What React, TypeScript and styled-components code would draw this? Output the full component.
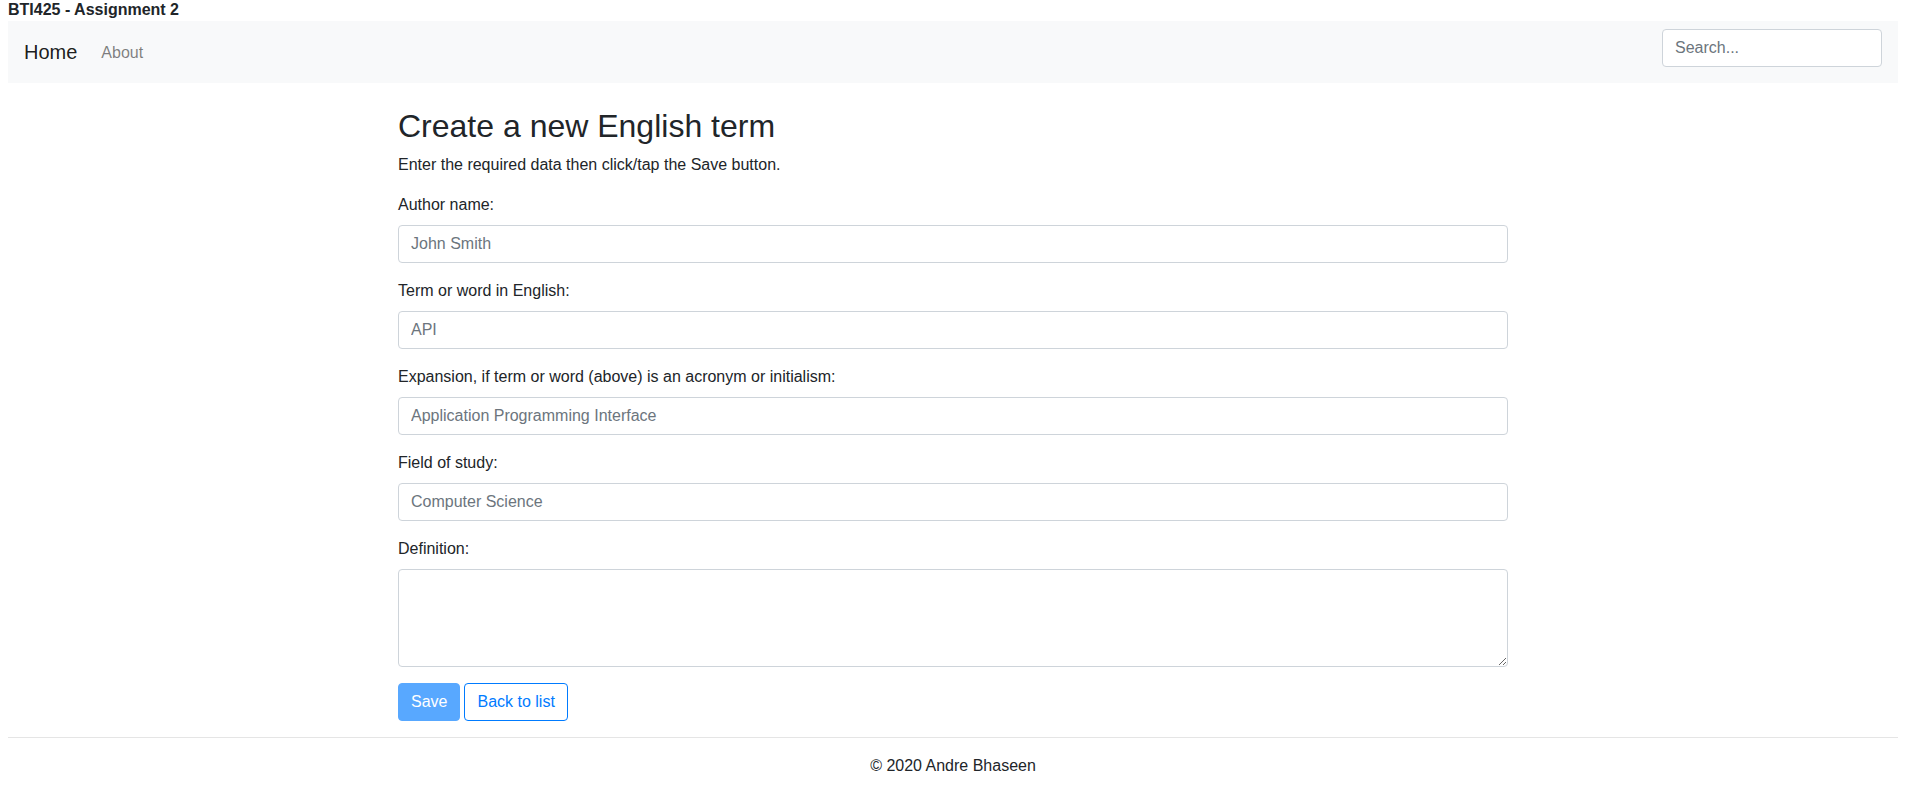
import React from "react";
import styled, { createGlobalStyle } from "styled-components";

const GlobalStyle = createGlobalStyle`
  html, body {
    background: #ffffff;
  }
  body {
    margin: 0 8px;
    font-family: "Liberation Sans", Arial, sans-serif;
    font-size: 16px;
    line-height: 1.5;
    color: #212529;
  }
  *, *::before, *::after {
    box-sizing: border-box;
  }
`;

const SiteTitle = styled.div`
  font-weight: 700;
  font-size: 16px;
  line-height: 20px;
  margin-bottom: 1px;
  color: #212529;
`;

const Navbar = styled.nav`
  display: flex;
  align-items: center;
  justify-content: space-between;
  height: 62px;
  padding: 0 16px;
  background: #f8f9fa;
`;

const NavLeft = styled.div`
  display: flex;
  align-items: center;
`;

const Brand = styled.a`
  font-size: 20px;
  line-height: 30px;
  padding: 5px 0;
  margin-right: 16px;
  color: rgba(0, 0, 0, 0.9);
  text-decoration: none;
`;

const NavLink = styled.a`
  padding: 9px 8px 7px;
  font-size: 16px;
  line-height: 24px;
  color: rgba(0, 0, 0, 0.5);
  text-decoration: none;
`;

const SearchInput = styled.input`
  align-self: flex-start;
  margin-top: 8px;
  width: 220px;
  height: 38px;
  padding: 6px 12px;
  font-family: "Liberation Sans", Arial, sans-serif;
  font-size: 16px;
  line-height: 1.5;
  color: #495057;
  background: #fff;
  border: 1px solid #ced4da;
  border-radius: 4px;
  outline: none;
  &::placeholder {
    color: #6c757d;
  }
`;

const Container = styled.main`
  max-width: 1140px;
  margin: 0 auto;
  padding: 24px 15px 0;
`;

const Heading = styled.h2`
  font-size: 32px;
  font-weight: 500;
  line-height: 1.2;
  margin: 0 0 8px;
`;

const Lead = styled.p`
  margin: 0 0 16px;
`;

const FormGroup = styled.div`
  margin-bottom: 16px;
`;

const Label = styled.label`
  display: block;
  margin-bottom: 8px;
  line-height: 24px;
`;

const TextInput = styled.input`
  display: block;
  width: 100%;
  height: 38px;
  padding: 6px 12px;
  font-family: "Liberation Sans", Arial, sans-serif;
  font-size: 16px;
  line-height: 1.5;
  color: #495057;
  background: #fff;
  border: 1px solid #ced4da;
  border-radius: 4px;
  outline: none;
  &::placeholder {
    color: #6c757d;
  }
`;

const TextArea = styled.textarea`
  display: block;
  width: 100%;
  height: 98px;
  padding: 6px 12px;
  font-family: "Liberation Sans", Arial, sans-serif;
  font-size: 16px;
  line-height: 1.5;
  color: #495057;
  background: #fff;
  border: 1px solid #ced4da;
  border-radius: 4px;
  outline: none;
`;

const ButtonRow = styled.div`
  display: flex;
  gap: 4px;
`;

const Button = styled.button<{ $variant: "primary" | "outline" }>`
  height: 38px;
  padding: 6px 12px;
  font-family: "Liberation Sans", Arial, sans-serif;
  font-size: 16px;
  line-height: 1.5;
  border-radius: 4px;
  border: 1px solid #007bff;
  cursor: pointer;
  background: ${(p) => (p.$variant === "primary" ? "#007bff" : "#fff")};
  color: ${(p) => (p.$variant === "primary" ? "#fff" : "#007bff")};
  &:disabled {
    opacity: 0.65;
    cursor: default;
  }
`;

const Rule = styled.hr`
  margin: 16px 0;
  border: 0;
  border-top: 1px solid rgba(0, 0, 0, 0.1);
`;

const Footer = styled.footer`
  text-align: center;
  line-height: 24px;
`;

const fields = [
  { label: "Author name:", placeholder: "John Smith" },
  { label: "Term or word in English:", placeholder: "API" },
  {
    label: "Expansion, if term or word (above) is an acronym or initialism:",
    placeholder: "Application Programming Interface",
  },
  { label: "Field of study:", placeholder: "Computer Science" },
];

export default function App() {
  return (
    <>
      <GlobalStyle />
      <SiteTitle>BTI425 - Assignment 2</SiteTitle>
      <Navbar>
        <NavLeft>
          <Brand href="#">Home</Brand>
          <NavLink href="#">About</NavLink>
        </NavLeft>
        <SearchInput type="text" placeholder="Search..." />
      </Navbar>
      <Container>
        <Heading>Create a new English term</Heading>
        <Lead>Enter the required data then click/tap the Save button.</Lead>
        {fields.map((f) => (
          <FormGroup key={f.label}>
            <Label>{f.label}</Label>
            <TextInput type="text" placeholder={f.placeholder} />
          </FormGroup>
        ))}
        <FormGroup>
          <Label>Definition:</Label>
          <TextArea />
        </FormGroup>
        <ButtonRow>
          <Button $variant="primary" disabled>
            Save
          </Button>
          <Button $variant="outline">Back to list</Button>
        </ButtonRow>
      </Container>
      <Rule />
      <Footer>© 2020 Andre Bhaseen</Footer>
    </>
  );
}
